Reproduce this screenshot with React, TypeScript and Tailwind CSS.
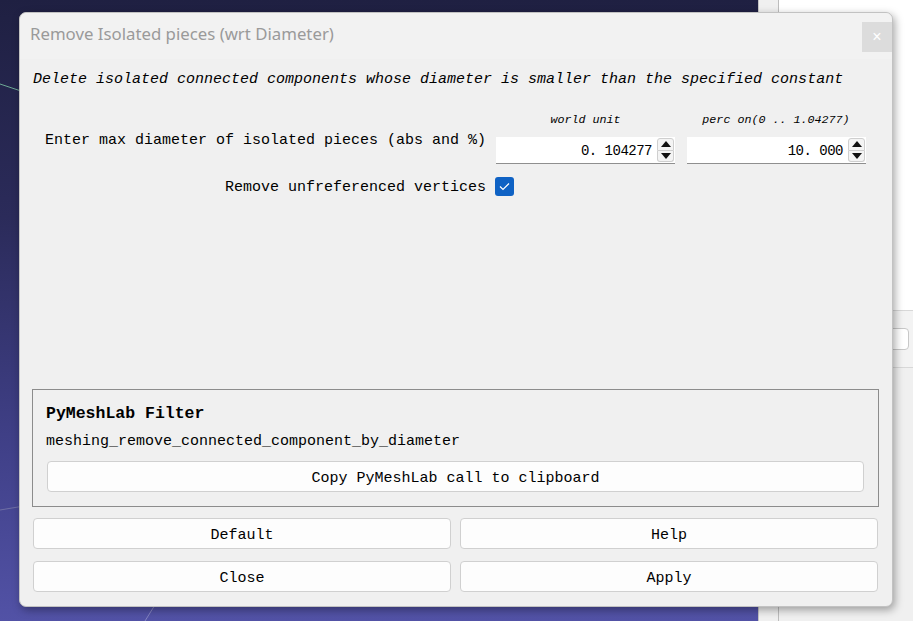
import React from "react";

const mono = { fontFamily: '"Liberation Mono", "DejaVu Sans Mono", monospace' } as const;

function SpinBox({ value }: { value: string }) {
  return (
    <div className="flex h-[27px] w-[179px] bg-white border-b border-[#8f8f8f]">
      <div
        className="flex-1 flex items-center justify-end pr-[5px] pt-[3px] text-[14px] tracking-[-0.5px] text-black"
        style={mono}
      >
        {value}
      </div>
      <div className="w-[18px] flex flex-col py-[1px] pr-[1px]">
        <div className="flex-1 flex items-center justify-center bg-[#f4f4f4] border border-[#cfcfcf] rounded-t-[3px]">
          <svg width="10" height="6" viewBox="0 0 10 6">
            <path d="M5 0 L10 6 L0 6 Z" fill="#111" />
          </svg>
        </div>
        <div className="flex-1 flex items-center justify-center bg-[#f4f4f4] border border-t-0 border-[#cfcfcf] rounded-b-[3px]">
          <svg width="10" height="6" viewBox="0 0 10 6">
            <path d="M0 0 L10 0 L5 6 Z" fill="#111" />
          </svg>
        </div>
      </div>
    </div>
  );
}

function Btn({ label, className = "" }: { label: string; className?: string }) {
  return (
    <div
      className={
        "h-[31px] flex items-center justify-center pt-[5px] bg-[#fdfdfd] border border-[#d0d0d0] rounded-[4px] text-[15px] text-black " +
        className
      }
      style={mono}
    >
      {label}
    </div>
  );
}

export default function App() {
  return (
    <div className="relative w-[913px] h-[621px] overflow-hidden flex">
      {/* 3D canvas */}
      <div className="relative w-[758px] h-full bg-[linear-gradient(180deg,#1f2042_0%,#2b2b5a_35%,#3f3f86_70%,#5252a6_100%)]">
        <svg className="absolute inset-0" width="758" height="621">
          <line x1="0" y1="84" x2="30" y2="94" stroke="#7fc9a6" strokeWidth="1" opacity="0.8" />
          <line x1="0" y1="510" x2="30" y2="505" stroke="#8a8ab0" strokeWidth="1" opacity="0.6" />
          <line x1="145" y1="621" x2="158" y2="600" stroke="#9a9acc" strokeWidth="1" opacity="0.7" />
        </svg>
      </div>
      {/* right side panel */}
      <div className="w-[21px] h-full bg-[#f0f0f0] border-l border-[#c4c4c4] border-r border-r-[#bdbdbd]" />
      <div className="flex-1 h-full bg-white flex flex-col">
        <div className="h-[310px]" />
        <div className="h-[58px] bg-[#f3f3f3] border-t border-b border-[#d8d8d8] flex items-center pl-[110px]">
          <div className="w-[20px] h-[22px] rounded-[4px] border border-[#c8c8c8] bg-white" />
        </div>
        <div className="flex-1 bg-[#f0f0f0]" />
      </div>

      {/* Dialog */}
      <div className="absolute left-[19px] top-[12px] w-[874px] h-[595px] bg-[#f0f0f0] border border-[#c2c2c2] rounded-[7px] shadow-[2px_3px_8px_rgba(0,0,0,0.35)] flex flex-col">
        {/* title bar */}
        <div className="h-[46px] flex items-start bg-[#f2f2f2] rounded-t-[7px]">
          <div
            className="pl-[10px] pt-[10px] text-[16.8px] leading-[22px] text-[#9a9a9a]"
            style={{ fontFamily: '"Noto Sans", "Open Sans", sans-serif' }}
          >
            Remove Isolated pieces (wrt Diameter)
          </div>
          <div className="ml-auto mt-[9px] w-[30px] h-[30px] bg-[#dcdcdc] flex items-center justify-center text-white text-[16px] leading-none" style={{ fontFamily: '"Liberation Sans", sans-serif' }}>
            ×
          </div>
        </div>

        {/* description */}
        <div className="mt-[11px] pl-[13px] text-[15px] leading-[20px] italic text-black" style={mono}>
          Delete isolated connected components whose diameter is smaller than the specified constant
        </div>

        {/* params */}
        <div className="mt-[21px] flex flex-col">
          <div className="flex h-[18px] items-center pt-[2px]" style={mono}>
            <div className="w-[476px]" />
            <div className="w-[179px] text-center italic text-[11.7px] text-black">world unit</div>
            <div className="w-[12px]" />
            <div className="w-[178px] text-center italic text-[11.7px] text-black">perc on(0 .. 1.04277)</div>
          </div>
          <div className="flex items-start">
            <div className="w-[468px] pt-[2px] text-right text-[15px] leading-[20px] text-black pr-[2px]" style={mono}>
              Enter max diameter of isolated pieces (abs and %)
            </div>
            <div className="w-[8px]" />
            <div className="mt-[8px] flex">
              <SpinBox value="0. 104277" />
              <div className="w-[12px]" />
              <div className="w-[178px]">
                <SpinBox value="10. 000" />
              </div>
            </div>
          </div>
          <div className="mt-[10px] flex items-center">
            <div className="w-[466px] pt-[4px] text-right text-[15px] leading-[20px] text-black" style={mono}>
              Remove unfreferenced vertices
            </div>
            <div className="w-[9px]" />
            <div className="w-[19px] h-[19px] rounded-[3px] bg-[#0f62c4] flex items-center justify-center">
              <svg width="11" height="9" viewBox="0 0 11 9">
                <path d="M1 4.5 L4 7.5 L10 1.5" fill="none" stroke="white" strokeWidth="1.2" />
              </svg>
            </div>
          </div>
        </div>

        <div className="flex-1" />

        {/* group box */}
        <div className="mx-[12px] mr-[13px] border border-[#8c8c8c] pt-[14px] pb-[14px] flex flex-col">
          <div className="pl-[13px] text-[16.5px] leading-[20px] font-bold text-black" style={mono}>
            PyMeshLab Filter
          </div>
          <div className="mt-[8px] pl-[13px] text-[15px] leading-[20px] text-black" style={mono}>
            meshing_remove_connected_component_by_diameter
          </div>
          <div className="mt-[9px] px-[14px]">
            <Btn label="Copy PyMeshLab call to clipboard" />
          </div>
        </div>

        {/* buttons */}
        <div className="mt-[11px] ml-[13px] mr-[14px] mb-[14px] grid grid-cols-2 gap-x-[9px] gap-y-[12px]">
          <Btn label="Default" />
          <Btn label="Help" />
          <Btn label="Close" />
          <Btn label="Apply" />
        </div>
      </div>
    </div>
  );
}
